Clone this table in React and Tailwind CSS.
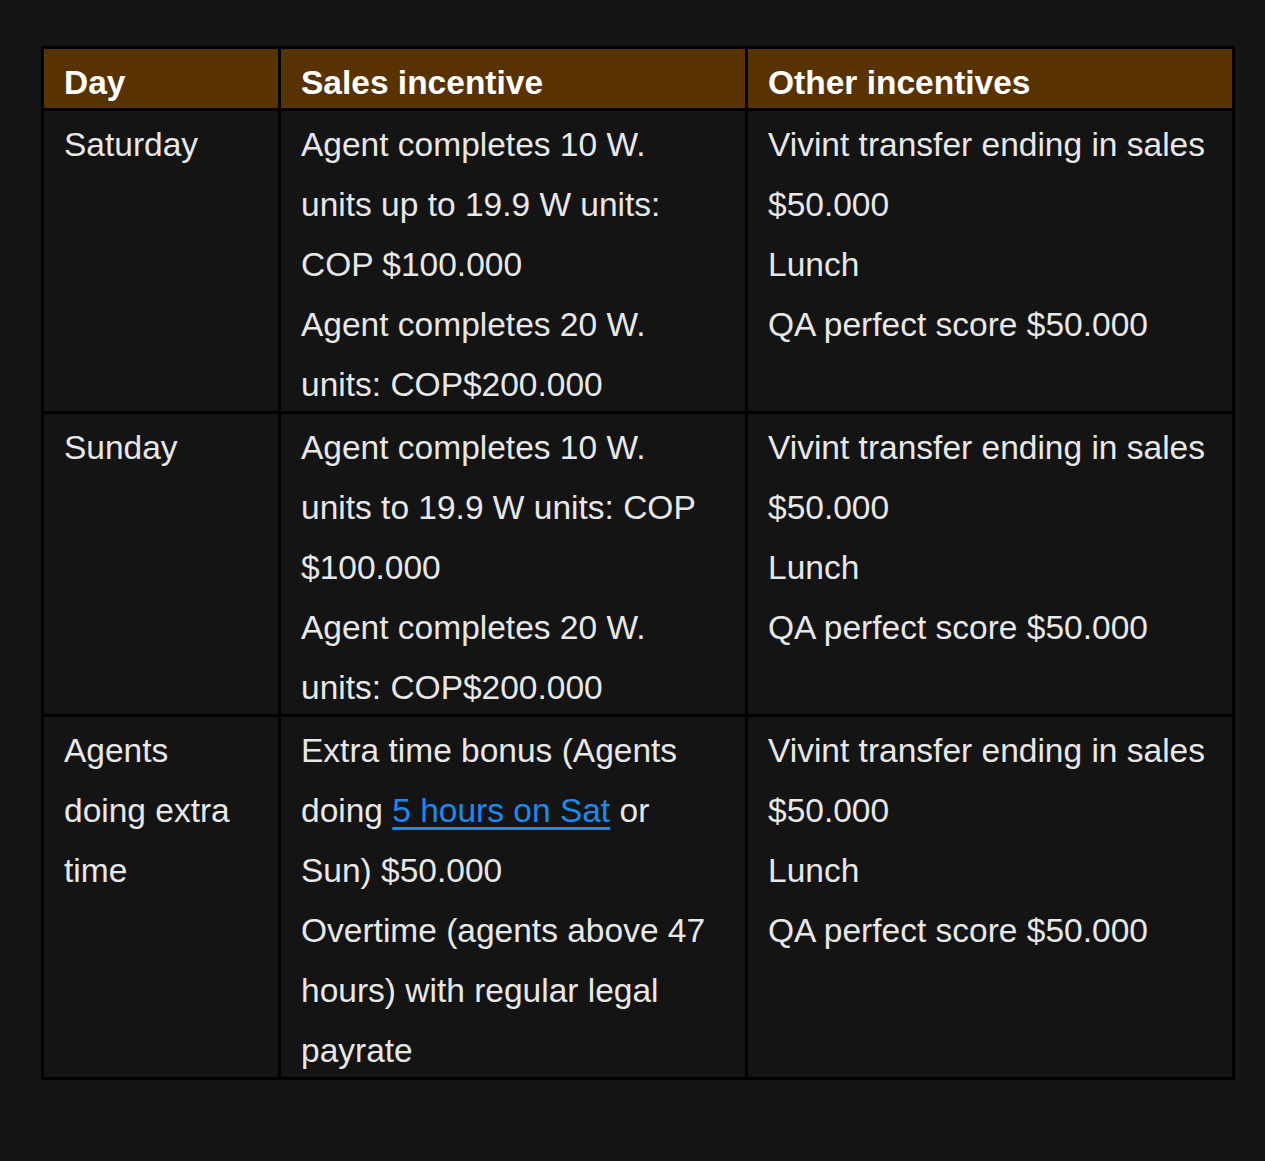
export default function App() {
  const font = { fontFamily: '"Liberation Sans", Arial, sans-serif' };
  const rows = [
    {
      day: "Saturday",
      sales: [
        "Agent completes 10 W. units up to 19.9 W units: COP $100.000",
        "Agent completes 20 W. units: COP$200.000",
      ],
    },
    {
      day: "Sunday",
      sales: [
        "Agent completes 10 W. units to 19.9 W units: COP $100.000",
        "Agent completes 20 W. units: COP$200.000",
      ],
    },
    {
      day: "Agents doing extra time",
      sales: [
        "LINK",
        "Overtime (agents above 47 hours) with regular legal payrate",
      ],
    },
  ];
  const other = [
    "Vivint transfer ending in sales $50.000",
    "Lunch",
    "QA perfect score $50.000",
  ];
  return (
    <div className="min-h-[1161px] w-[1265px] bg-[#141414] pt-[46px] pl-[41px]" style={font}>
      <table className="w-[1191px] table-fixed border-collapse text-[33.5px] leading-[60px] text-[#e8e8e8]">
        <colgroup>
          <col className="w-[237px]" />
          <col className="w-[467px]" />
          <col className="w-[487px]" />
        </colgroup>
        <thead>
          <tr className="h-[62px] bg-[#583200]">
            <th className="border-[3px] border-black pl-[20px] pt-[8px] text-left font-bold leading-[40px] text-white">Day</th>
            <th className="border-[3px] border-black pl-[20px] pt-[8px] text-left font-bold leading-[40px] text-white">Sales incentive</th>
            <th className="border-[3px] border-black pl-[20px] pt-[8px] text-left font-bold leading-[40px] text-white">Other incentives</th>
          </tr>
        </thead>
        <tbody>
          {rows.map((r, i) => (
            <tr key={i}>
              <td className="border-[3px] border-black pl-[20px] py-0 align-top">
                <div className="relative top-[4px] w-[180px]">{r.day}</div>
              </td>
              <td className="border-[3px] border-black pl-[20px] py-0 align-top">
                <div className="relative top-[4px] w-[412px]">
                  {r.sales.map((s, j) =>
                    s === "LINK" ? (
                      <div key={j}>
                        Extra time bonus (Agents doing{" "}
                        <a href="#" className="text-[#1a8cf0] underline decoration-[3px] underline-offset-[5px]">5 hours on Sat</a>{" "}
                        or Sun) $50.000
                      </div>
                    ) : (
                      <div key={j}>{s}</div>
                    )
                  )}
                </div>
              </td>
              <td className="border-[3px] border-black pl-[20px] py-0 align-top">
                <div className="relative top-[4px]">
                  {other.map((s, j) => (
                    <div key={j}>{s}</div>
                  ))}
                </div>
              </td>
            </tr>
          ))}
        </tbody>
      </table>
    </div>
  );
}
